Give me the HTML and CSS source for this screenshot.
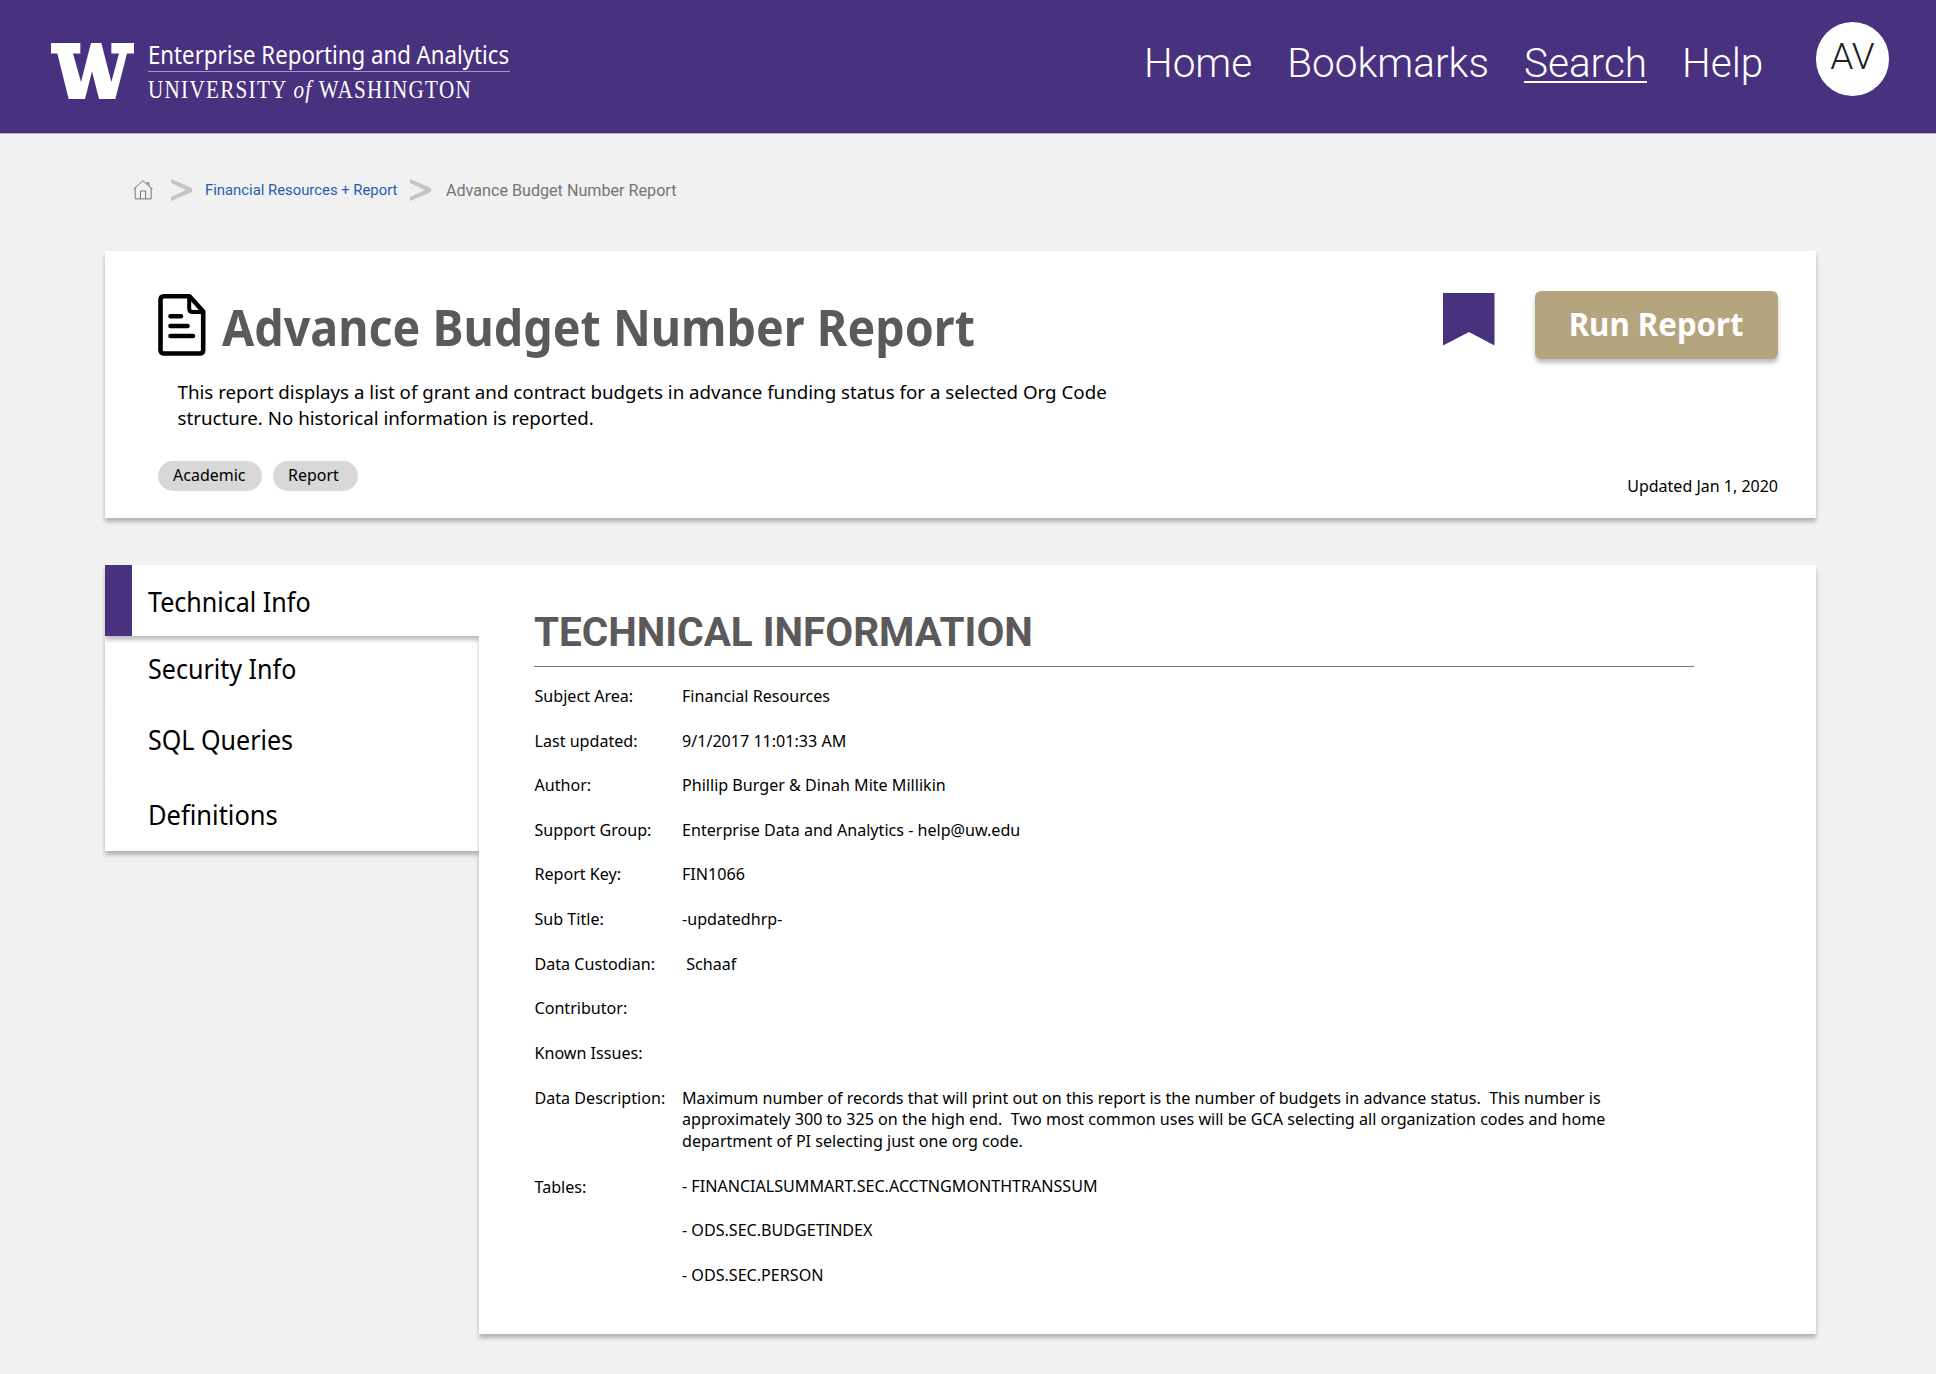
FILE: index.html
```html
<!DOCTYPE html>
<html lang="en">
<head>
<meta charset="utf-8">
<title>Advance Budget Number Report</title>
<link rel="stylesheet" href="styles.css">
</head>
<body>
<header class="site-header">
  <a class="brand">
    <svg class="brand-mark" viewBox="32 68 249 167" preserveAspectRatio="none"><path fill="#fff" d="M32 68H120V99H98L122 184L152 68H183L213 184L236 99H213V68H281V99H260L225 235H176L155 152L134 235H85L51 99H32Z"/></svg>
    <span class="brand-text">
      <span class="brand-unit"><span class="narrow">Enterprise Reporting and Analytics</span></span>
      <span class="brand-univ"><span class="narrow">UNIVERSITY <i>of</i> WASHINGTON</span></span>
    </span>
  </a>
  <nav class="main-nav">
    <a>Home</a><a>Bookmarks</a><a class="current">Search</a><a>Help</a>
  </nav>
  <span class="avatar">AV</span>
</header>
<main>
  <nav class="crumbs">
    <svg class="home" viewBox="0 0 20 20" fill="none" stroke="#777" stroke-width="1"><path d="M.5 9.2L10 .8L19.500 9.200M2.200 8V18.900H18.200V8M7.500 18.900V11H12.600V18.900M14 4V2.700H16V6"/></svg>
    <svg class="sep" viewBox="0 0 21 22"><path fill="#c4c4c4" d="M0 0L21 9V13L0 22V18L15 11L0 4Z"/></svg>
    <a class="crumb-link">Financial Resources + Report</a>
    <svg class="sep" viewBox="0 0 21 22"><path fill="#c4c4c4" d="M0 0L21 9V13L0 22V18L15 11L0 4Z"/></svg>
    <span class="crumb-here">Advance Budget Number Report</span>
  </nav>
  <section class="summary">
    <div class="summary-main">
      <div class="title-row">
        <svg class="doc" viewBox="0 0 48 62" fill="none" stroke="#000" stroke-width="4.600" stroke-linejoin="round" stroke-linecap="round"><path d="M6 2.300H31.500L45.200 17.500V56Q45.200 59.500 41.500 59.500H6Q2.500 59.500 2.500 56V6Q2.500 2.300 6 2.300Z"/><path d="M31.200 3V14.500Q31.200 18 34.700 18H45" stroke-width="4"/><path d="M12.500 22.300H23M12.500 32H29.500M12.500 42H35"/></svg>
        <h1><span class="narrow">Advance Budget Number Report</span></h1>
      </div>
      <p class="lead">This report displays a list of grant and contract budgets in advance funding status for a selected Org Code<br>structure. No historical information is reported.</p>
      <div class="tags"><span class="tag">Academic</span><span class="tag">Report</span></div>
    </div>
    <div class="summary-side">
      <div class="actions">
        <svg class="bookmark" viewBox="0 0 52 53"><path fill="#48317f" d="M0 0H51.500V52.500L26 39L0 52.500Z"/></svg>
        <button class="run"><span class="narrow">Run Report</span></button>
      </div>
      <p class="updated">Updated Jan 1, 2020</p>
    </div>
  </section>
  <div class="details">
    <nav class="tabs">
      <a class="tab active"><span class="narrow">Technical Info</span></a>
      <a class="tab security"><span class="narrow">Security Info</span></a>
      <a class="tab sql"><span class="narrow">SQL Queries</span></a>
      <a class="tab definitions"><span class="narrow">Definitions</span></a>
    </nav>
    <section class="panel">
      <h2>TECHNICAL INFORMATION</h2>
      <dl>
        <dt>Subject Area:</dt><dd>Financial Resources</dd>
        <dt>Last updated:</dt><dd>9/1/2017 11:01:33 AM</dd>
        <dt>Author:</dt><dd>Phillip Burger &amp; Dinah Mite Millikin</dd>
        <dt>Support Group:</dt><dd>Enterprise Data and Analytics - help@uw.edu</dd>
        <dt>Report Key:</dt><dd>FIN1066</dd>
        <dt>Sub Title:</dt><dd>-updatedhrp-</dd>
        <dt>Data Custodian:</dt><dd>&nbsp;Schaaf</dd>
        <dt>Contributor:</dt><dd></dd>
        <dt>Known Issues:</dt><dd></dd>
        <dt>Data Description:</dt><dd>Maximum number of records that will print out on this report is the number of budgets in advance status.&nbsp; This number is<br>approximately 300 to 325 on the high end.&nbsp; Two most common uses will be GCA selecting all organization codes and home<br>department of PI selecting just one org code.</dd>
        <dt class="tables-label">Tables:</dt><dd>- FINANCIALSUMMART.SEC.ACCTNGMONTHTRANSSUM</dd>
        <dd class="next">- ODS.SEC.BUDGETINDEX</dd>
        <dd class="next">- ODS.SEC.PERSON</dd>
      </dl>
    </section>
  </div>
</main>
</body>
</html>
```
FILE: styles.css
```css
* { box-sizing: border-box; }
body { margin: 0; width: 1936px; height: 1374px; overflow: hidden; background: #f1f1f1; color: #000; font-family: "Noto Sans", sans-serif; font-size: 16.100px; }
h1, h2, p, dl, dd { margin: 0; }
svg { display: block; flex: none; }
.narrow { display: inline-block; white-space: nowrap; transform: scaleX(.895); transform-origin: 0 50%; }

.site-header { display: flex; align-items: flex-start; height: 134px; padding-left: 51px; background: #48317f; border-bottom: 1px solid #b3a9cb; color: #fff; }
.brand { display: flex; }
.brand-mark { width: 83px; height: 56px; margin-top: 42.500px; }
.brand-text { display: flex; flex-direction: column; width: 362px; margin: 38px 0 0 14px; }
.brand-unit { height: 34px; border-bottom: 1.500px solid #a195bd; font-size: 25px; line-height: 32px; }
.brand-unit .narrow { transform: scaleX(.889); }
.brand-univ { font: 24.500px/36px "Liberation Serif", serif; letter-spacing: 1.500px; }
.brand-univ .narrow { transform: scaleX(.862); }
.main-nav { display: flex; gap: 35px; margin-left: auto; padding-top: 40px; font: 300 40.500px/47px Roboto, sans-serif; }
.current { text-decoration: underline; text-decoration-thickness: 2px; text-underline-offset: 4px; }
.avatar { display: flex; align-items: center; justify-content: center; width: 73.500px; height: 73.500px; margin: 22.300px 46.800px 0 52.500px; padding-bottom: 5px; border-radius: 50%; background: #fff; color: #222; font: 300 37px/40px Roboto, sans-serif; }

main { padding: 0 120px 0 105px; }
.crumbs { display: flex; align-items: center; height: 117px; padding: 0 0 5px 28px; font-family: Roboto, sans-serif; }
.home { width: 20px; height: 20px; margin-right: 18px; }
.sep { width: 21px; height: 22px; }
.crumb-link { margin: 0 13px; color: #1f5fb0; font-size: 14.850px; }
.crumb-here { margin-left: 14.500px; color: #757575; font-size: 16.150px; }

.summary { display: flex; justify-content: space-between; height: 267px; padding: 40px 38px 0 52.500px; background: #fff; box-shadow: 0 4px 4px rgba(0,0,0,.25); }
.title-row { display: flex; }
.doc { width: 48px; height: 62px; margin-top: 3px; }
h1 { width: 770px; margin-left: 16px; color: #5b5959; font-size: 50.500px; line-height: 72px; font-weight: 700; }
h1 .narrow { transform: scaleX(.923); }
.lead { margin: 15.500px 0 0 20px; font-size: 18.740px; line-height: 26px; white-space: nowrap; }
.tags { display: flex; gap: 11px; margin-top: 30px; }
.tag { height: 30px; padding: 0 19px 0 15.500px; border-radius: 15px; background: #d8d8d8; font-size: 16px; line-height: 29px; }
.tag:first-child { padding-right: 16px; }
.actions { display: flex; justify-content: flex-end; gap: 40px; }
.bookmark { width: 52px; height: 53px; margin-top: 2px; }
.run { width: 243px; height: 68px; padding: 0 0 4px; border: 0; border-radius: 6px; background: #b5a57e; color: #fff; font: 700 32.500px "Noto Sans", sans-serif; box-shadow: 0 4px 4px rgba(0,0,0,.25); }
.run .narrow { transform: scaleX(.96); transform-origin: 50% 50%; }
.updated { margin-top: 116px; text-align: right; font-size: 16px; line-height: 22px; }

.details { display: flex; align-items: flex-start; margin-top: 46.500px; }
.tabs { width: 374px; }
.tab { display: block; position: relative; height: 71.600px; padding-left: 43px; background: #fff; font-size: 28px; line-height: 72px; box-shadow: 0 4px 4px rgba(0,0,0,.25); }
.tab.active { z-index: 2; border-left: 27px solid #48317f; padding-left: 16px; clip-path: inset(0 0 -10px -10px); }
.security { line-height: 64px; }
.sql { line-height: 62px; }
.definitions { line-height: 70px; }
.definitions .narrow { transform: scaleX(.91); }
.panel { position: relative; flex: 1; height: 769px; padding: 43px 55px 0; background: #fff; box-shadow: 0 4px 4px rgba(0,0,0,.25); }
h2 { width: 1160px; height: 59.500px; border-bottom: 1.500px solid #777; color: #5b5959; font: 700 40.450px/49px Roboto, sans-serif; }
dl { display: grid; grid-template-columns: 147.500px 1fr; row-gap: 22.830px; padding: 18.900px 0 0 .5px; line-height: 21.800px; }
.next { grid-column: 2; }
.tables-label { padding-top: 1px; margin-bottom: -1px; }
```
